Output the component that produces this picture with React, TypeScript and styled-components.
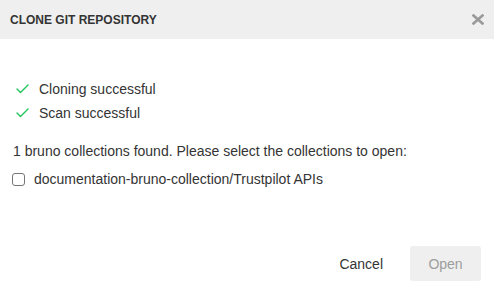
import React from "react";
import styled, { createGlobalStyle } from "styled-components";

const Global = createGlobalStyle`
  html, body { margin: 0; padding: 0; background: #ffffff; }
  body { font-family: "Liberation Sans", Arial, Helvetica, sans-serif; }
  * { box-sizing: border-box; }
`;

const Dialog = styled.div`
  width: 494px;
  height: 291px;
  display: flex;
  flex-direction: column;
  background: #ffffff;
  color: #343434;
`;

const Header = styled.div`
  height: 39px;
  flex: 0 0 39px;
  display: flex;
  align-items: center;
  justify-content: space-between;
  padding: 0 9px 0 10px;
  background: #efefef;
`;

const Title = styled.div`
  font-size: 12px;
  font-weight: 700;
  color: #343434;
  text-transform: uppercase;
`;

const Close = styled.button`
  border: 0;
  background: transparent;
  padding: 0;
  width: 14px;
  height: 14px;
  display: flex;
  align-items: center;
  justify-content: center;
  cursor: pointer;
`;

const Body = styled.div`
  flex: 1;
  display: flex;
  flex-direction: column;
  padding: 38px 13px 0 13px;
  font-size: 14px;
  line-height: 24px;
  color: #343434;
`;

const StatusList = styled.div`
  display: flex;
  flex-direction: column;
  padding-left: 3px;
`;

const StatusRow = styled.div`
  display: flex;
  align-items: center;
  gap: 10px;
  height: 24px;
`;

const Message = styled.div<{ $top?: number }>`
  margin-top: ${(p) => p.$top ?? 0}px;
  height: 24px;
`;

const CheckRow = styled.label`
  margin-top: 4px;
  display: flex;
  align-items: center;
  gap: 9px;
  height: 24px;
`;

const Box = styled.span`
  width: 13px;
  height: 13px;
  border: 1px solid #767676;
  border-radius: 3px;
  background: #fff;
  display: inline-block;
  margin-left: -1px;
`;

const Footer = styled.div`
  display: flex;
  justify-content: flex-end;
  align-items: center;
  gap: 13px;
  padding: 0 13px 10px 0;
`;

const TextButton = styled.button`
  border: 0;
  background: transparent;
  font-family: inherit;
  font-size: 14px;
  color: #343434;
  padding: 0 14px;
  height: 35px;
`;

const PrimaryButton = styled.button<{ $disabled?: boolean }>`
  border: 0;
  border-radius: 3px;
  font-family: inherit;
  font-size: 14px;
  width: 71px;
  height: 35px;
  background: ${(p) => (p.$disabled ? "#efefef" : "#546de5")};
  color: ${(p) => (p.$disabled ? "#9d9d9d" : "#fff")};
`;

const Check = () => (
  <svg width="13" height="10" viewBox="0 0 13 10" fill="none">
    <polyline points="1,5 4.5,8.5 12,1" stroke="#22c55e" strokeWidth="1.4" strokeLinecap="round" strokeLinejoin="round" />
  </svg>
);

const Cross = () => (
  <svg width="12" height="11" viewBox="0 0 12 11">
    <path d="M1.5 1.5 L10.5 9.5 M10.5 1.5 L1.5 9.5" stroke="#9a9a9a" strokeWidth="2.6" strokeLinecap="square" />
  </svg>
);

export default function App() {
  return (
    <>
      <Global />
      <Dialog>
        <Header>
          <Title>Clone Git Repository</Title>
          <Close aria-label="close">
            <Cross />
          </Close>
        </Header>
        <Body>
          <StatusList>
            <StatusRow>
              <Check />
              <span>Cloning successful</span>
            </StatusRow>
            <StatusRow>
              <Check />
              <span>Scan successful</span>
            </StatusRow>
          </StatusList>
          <Message $top={14}>1 bruno collections found. Please select the collections to open:</Message>
          <CheckRow>
            <Box />
            <span>documentation-bruno-collection/Trustpilot APIs</span>
          </CheckRow>
        </Body>
        <Footer>
          <TextButton>Cancel</TextButton>
          <PrimaryButton $disabled>Open</PrimaryButton>
        </Footer>
      </Dialog>
    </>
  );
}
